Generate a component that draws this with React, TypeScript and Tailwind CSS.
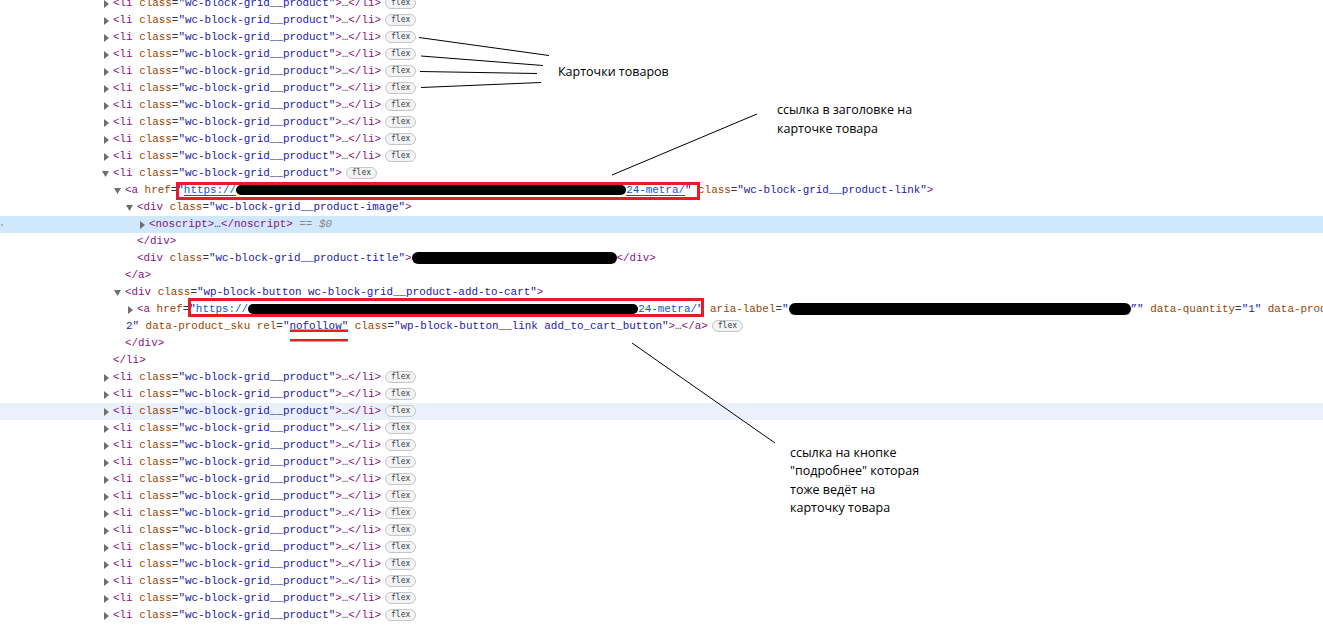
import type { ReactNode } from "react";

// devtools token colours
const TAG = "text-[#881280]";
const ATTR = "text-[#994500]";
const VAL = "text-[#1a1aa6]";

function Tri({ open }: { open?: boolean }) {
  return open ? (
    <svg width="7" height="6" viewBox="0 0 7 6">
      <polygon points="0,0 7,0 3.5,6" fill="#6e6e6e" />
    </svg>
  ) : (
    <svg width="5" height="8" viewBox="0 0 5 8">
      <polygon points="0,0 5,4 0,8" fill="#6e6e6e" />
    </svg>
  );
}

function Flex() {
  return (
    <span className="ml-[4px] inline-flex h-[12px] items-center rounded-full border border-[#c4c7c5] bg-[#f1f3f4] px-[5px] align-middle font-['DejaVu_Sans_Mono',monospace] text-[8px] leading-none text-[#3c4043]">
      flex
    </span>
  );
}

function Redact({ w, tall }: { w: string; tall?: boolean }) {
  return <span className={`inline-block rounded-full bg-black align-middle ${tall ? "h-[12px]" : "h-[10px]"} ${w}`} />;
}

function Row({
  pad,
  arrow,
  hl,
  children,
}: {
  pad: string;
  arrow?: "right" | "down";
  hl?: "sel" | "hover";
  children: ReactNode;
}) {
  const bg = hl === "sel" ? "bg-[#cfe8fc]" : hl === "hover" ? "bg-[#eaf1fb]" : "";
  return (
    <div className={`relative flex h-[17px] shrink-0 items-center ${pad} ${bg}`}>
      {hl === "sel" && <span className="absolute left-[1px] top-[8px] h-[2px] w-[2px] rounded-full bg-[#9aa0a6]" />}
      {arrow === "right" && (
        <span className="flex w-[9px] shrink-0 items-center">
          <Tri />
        </span>
      )}
      {arrow === "down" && (
        <span className="flex w-[11px] shrink-0 items-center">
          <Tri open />
        </span>
      )}
      <span className="whitespace-pre leading-[17px] text-[#303942]">{children}</span>
    </div>
  );
}

function CollapsedLi({ hl }: { hl?: "hover" }) {
  return (
    <Row pad="pl-[104px]" arrow="right" hl={hl}>
      <span className={TAG}>{"<li"}</span>
      <span className={ATTR}> class</span>=<span className={VAL}>"wc-block-grid__product"</span>
      <span className={TAG}>{">"}</span>…<span className={TAG}>{"</li>"}</span>
      <Flex />
    </Row>
  );
}

function Link({ children }: { children: ReactNode }) {
  return <span className="text-[#1155cc] underline underline-offset-[2px]">{children}</span>;
}

export default function App() {
  const before = Array.from({ length: 10 });
  const after = Array.from({ length: 16 });

  return (
    <div className="relative h-[626px] w-[1323px] overflow-hidden bg-white">
      <div className="-mt-[5px] flex flex-col font-['Liberation_Mono',monospace] text-[10.9px]">
        {before.map((_, i) => (
          <CollapsedLi key={`b${i}`} />
        ))}

        <Row pad="pl-[102px]" arrow="down">
          <span className={TAG}>{"<li"}</span>
          <span className={ATTR}> class</span>=<span className={VAL}>"wc-block-grid__product"</span>
          <span className={TAG}>{">"}</span>
          <Flex />
        </Row>
        <Row pad="pl-[114px]" arrow="down">
          <span className={TAG}>{"<a"}</span>
          <span className={ATTR}> href</span>=<span className={VAL}>"</span>
          <Link>
            https://
            <Redact w="w-[390px]" />
            24-metra/
          </Link>
          <span className={VAL}>"</span>
          <span className={ATTR}> class</span>=<span className={VAL}>"wc-block-grid__product-link"</span>
          <span className={TAG}>{">"}</span>
        </Row>
        <Row pad="pl-[126px]" arrow="down">
          <span className={TAG}>{"<div"}</span>
          <span className={ATTR}> class</span>=<span className={VAL}>"wc-block-grid__product-image"</span>
          <span className={TAG}>{">"}</span>
        </Row>
        <Row pad="pl-[140px]" arrow="right" hl="sel">
          <span className={TAG}>{"<noscript>"}</span>…<span className={TAG}>{"</noscript>"}</span>
          <span className="text-[#888]"> == </span>
          <span className="italic text-[#888]">$0</span>
        </Row>
        <Row pad="pl-[137px]">
          <span className={TAG}>{"</div>"}</span>
        </Row>
        <Row pad="pl-[137px]">
          <span className={TAG}>{"<div"}</span>
          <span className={ATTR}> class</span>=<span className={VAL}>"wc-block-grid__product-title"</span>
          <span className={TAG}>{">"}</span>
          <Redact w="w-[205px]" tall />
          <span className={TAG}>{"</div>"}</span>
        </Row>
        <Row pad="pl-[125px]">
          <span className={TAG}>{"</a>"}</span>
        </Row>
        <Row pad="pl-[114px]" arrow="down">
          <span className={TAG}>{"<div"}</span>
          <span className={ATTR}> class</span>=
          <span className={VAL}>"wp-block-button wc-block-grid__product-add-to-cart"</span>
          <span className={TAG}>{">"}</span>
        </Row>
        <Row pad="pl-[128px]" arrow="right">
          <span className={TAG}>{"<a"}</span>
          <span className={ATTR}> href</span>=<span className={VAL}>"</span>
          <Link>
            https://
            <Redact w="w-[390px]" />
            24-metra/
          </Link>
          <span className={VAL}>"</span>
          <span className={ATTR}> aria-label</span>=<span className={VAL}>"</span>
          <Redact w="w-[342px]" tall />
          <span className={VAL}>”"</span>
          <span className={ATTR}> data-quantity</span>=<span className={VAL}>"1"</span>
          <span className={ATTR}> data-product_id</span>=<span className={VAL}>"1</span>
        </Row>
        <Row pad="pl-[126px]">
          <span className={VAL}>2"</span>
          <span className={ATTR}> data-product_sku rel</span>=<span className={VAL}>"nofollow"</span>
          <span className={ATTR}> class</span>=<span className={VAL}>"wp-block-button__link add_to_cart_button"</span>
          <span className={TAG}>{">"}</span>…<span className={TAG}>{"</a>"}</span>
          <Flex />
        </Row>
        <Row pad="pl-[125px]">
          <span className={TAG}>{"</div>"}</span>
        </Row>
        <Row pad="pl-[113px]">
          <span className={TAG}>{"</li>"}</span>
        </Row>

        {after.map((_, i) => (
          <CollapsedLi key={`a${i}`} hl={i === 2 ? "hover" : undefined} />
        ))}
      </div>

      {/* hand-drawn annotation marks */}
      <svg className="pointer-events-none absolute left-0 top-0" width="1323" height="626">
        <g stroke="#000" strokeWidth="1" fill="none">
          <line x1="419" y1="37.5" x2="549" y2="55.5" />
          <line x1="421" y1="56" x2="543" y2="65.5" />
          <line x1="420" y1="71.5" x2="537" y2="73.5" />
          <line x1="421" y1="87.5" x2="541" y2="82.5" />
          <line x1="612" y1="175" x2="757" y2="114" />
          <line x1="632" y1="343" x2="775" y2="443" />
        </g>
        <g stroke="#e31e24" strokeWidth="3" fill="none">
          <rect x="177.5" y="183.5" width="521" height="15" />
          <rect x="189.5" y="299.5" width="513" height="16" />
        </g>
        <rect x="290" y="329.5" width="58" height="2.5" fill="#e31e24" />
        <rect x="290" y="339" width="58" height="2.5" fill="#e31e24" />
      </svg>

      <div className="absolute left-[558px] top-[63px] font-['Open_Sans',sans-serif] text-[12.5px] leading-[18.5px] text-black">
        Карточки товаров
      </div>
      <div className="absolute left-[777px] top-[101px] font-['Open_Sans',sans-serif] text-[12.5px] leading-[18.5px] text-black">
        <div>ссылка в заголовке на</div>
        <div>карточке товара</div>
      </div>
      <div className="absolute left-[790px] top-[444px] font-['Open_Sans',sans-serif] text-[12.5px] leading-[18.3px] text-black">
        <div>ссылка на кнопке</div>
        <div>"подробнее" которая</div>
        <div>тоже ведёт на</div>
        <div>карточку товара</div>
      </div>
    </div>
  );
}
